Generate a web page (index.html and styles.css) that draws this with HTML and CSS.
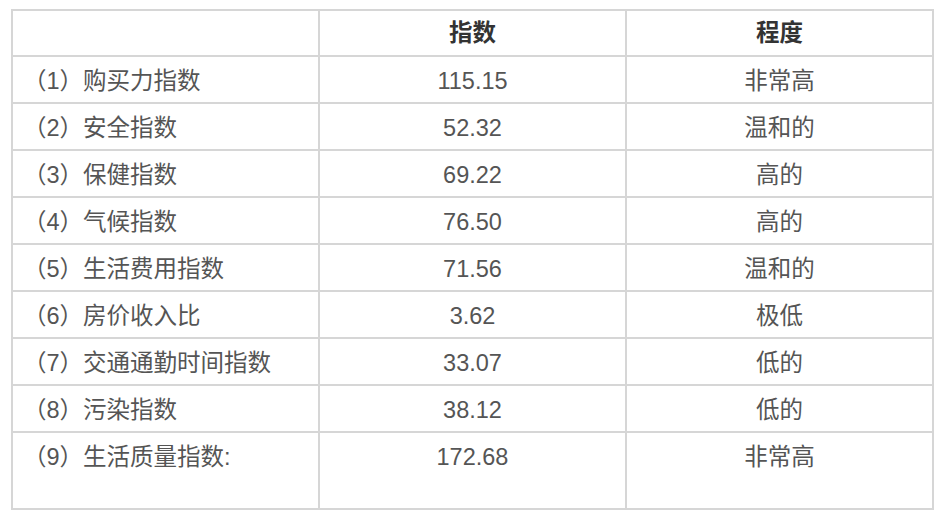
FILE: index.html
```html
<!DOCTYPE html>
<html lang="zh-CN">
<head>
<meta charset="utf-8">
<title>生活质量指数</title>
<link rel="stylesheet" href="styles.css">
</head>
<body>
<table class="index-table">
  <thead>
    <tr>
      <th class="col-name"></th>
      <th>指数</th>
      <th>程度</th>
    </tr>
  </thead>
  <tbody>
    <tr><td class="col-name">（1）购买力指数</td><td>115.15</td><td>非常高</td></tr>
    <tr><td class="col-name">（2）安全指数</td><td>52.32</td><td>温和的</td></tr>
    <tr><td class="col-name">（3）保健指数</td><td>69.22</td><td>高的</td></tr>
    <tr><td class="col-name">（4）气候指数</td><td>76.50</td><td>高的</td></tr>
    <tr><td class="col-name">（5）生活费用指数</td><td>71.56</td><td>温和的</td></tr>
    <tr><td class="col-name">（6）房价收入比</td><td>3.62</td><td>极低</td></tr>
    <tr><td class="col-name">（7）交通通勤时间指数</td><td>33.07</td><td>低的</td></tr>
    <tr><td class="col-name">（8）污染指数</td><td>38.12</td><td>低的</td></tr>
    <tr class="last-row"><td class="col-name">（9）生活质量指数:</td><td>172.68</td><td>非常高</td></tr>
  </tbody>
</table>
</body>
</html>
```

FILE: styles.css
```css
html, body {
  margin: 0;
  padding: 0;
  background: #ffffff;
}

body {
  padding: 9px 0 0 11px;
  font-family: "Liberation Sans", "Noto Sans CJK SC", sans-serif;
  font-size: 23.5px;
  color: #555555;
}

.index-table {
  border-collapse: separate;
  border-spacing: 0;
  width: 923px;
  table-layout: fixed;
  border-top: 2px solid #d6d6d6;
  border-left: 2px solid #d6d6d6;
}

.index-table th,
.index-table td {
  box-sizing: border-box;
  border-right: 2px solid #d6d6d6;
  border-bottom: 2px solid #d6d6d6;
  width: 307px;
  text-align: center;
  vertical-align: top;
  padding: 0;
  white-space: nowrap;
  overflow: hidden;
}

.index-table th {
  height: 46px;
  line-height: 44px;
  font-weight: bold;
  color: #333333;
}

.index-table td {
  height: 47px;
  padding-top: 3px;
  line-height: 42px;
}

.index-table .col-name {
  text-align: left;
  padding-left: 10px;
}

.index-table .last-row td {
  height: 77px;
}
```
